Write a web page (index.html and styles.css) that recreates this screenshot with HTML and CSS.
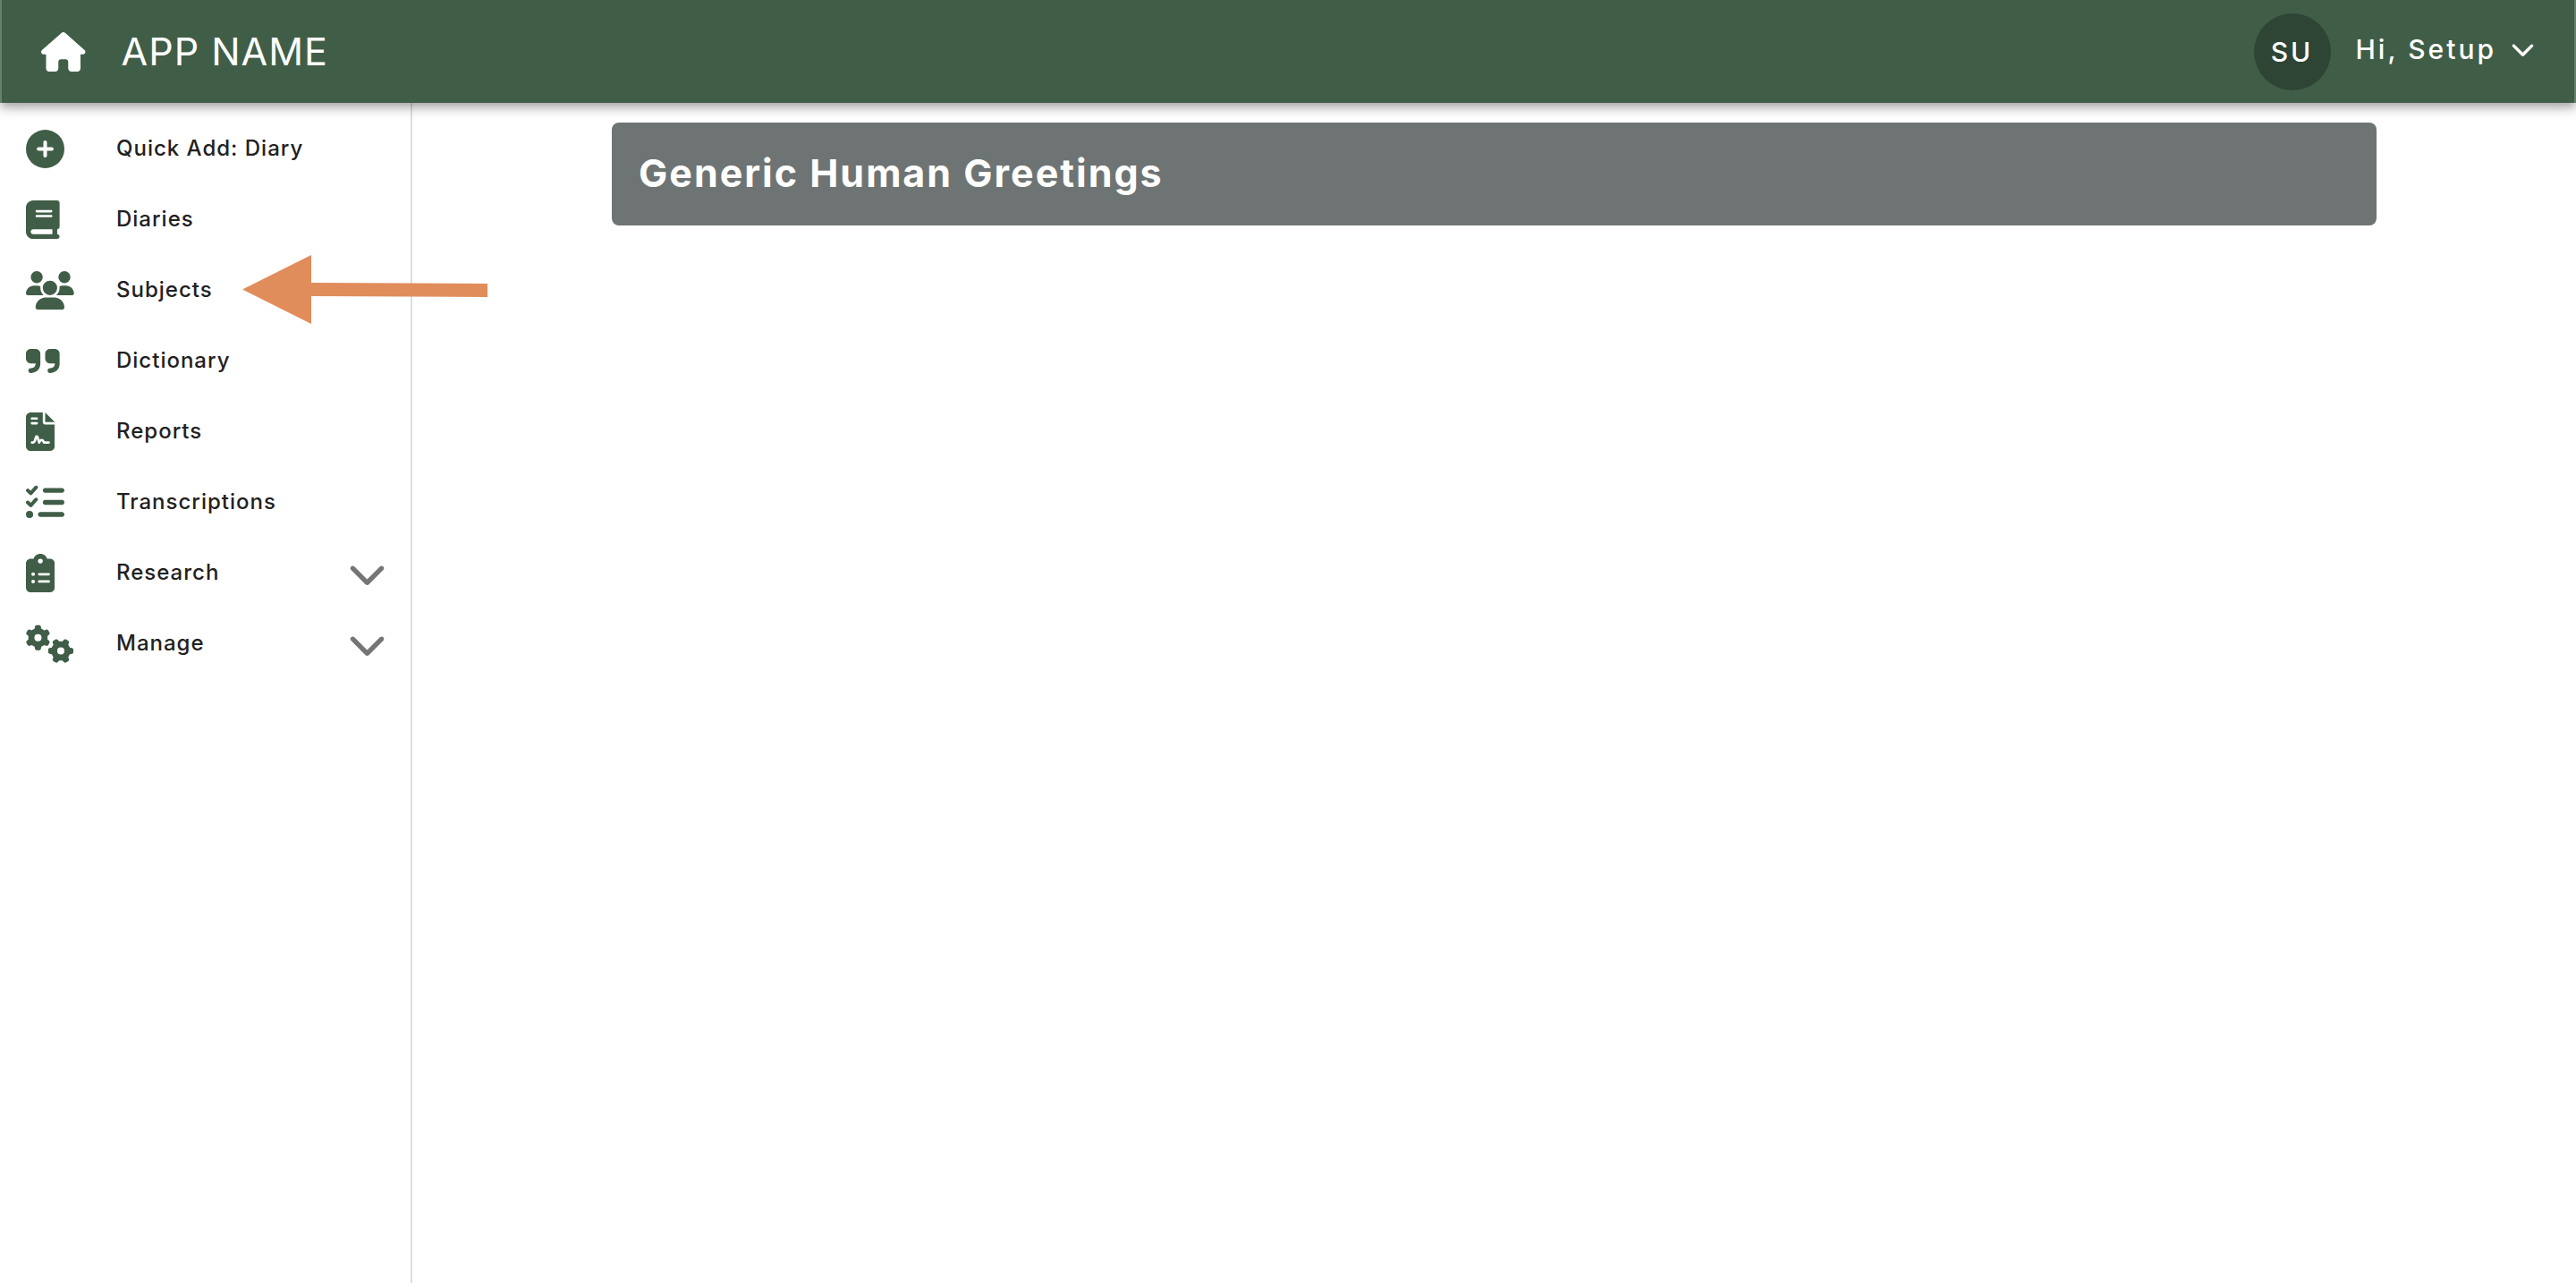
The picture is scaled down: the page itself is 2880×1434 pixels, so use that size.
FILE: index.html
```html
<!DOCTYPE html>
<html lang="en">
<head>
<meta charset="utf-8">
<title>App Name</title>
<link rel="stylesheet" href="styles.css">
</head>
<body>
<header class="topbar">
  <a class="brand" href="#">
    <svg class="brand-icon" viewBox="0 0 576 512" aria-hidden="true"><path d="M575.8 255.5c0 18-15 32.1-32 32.1h-32l.7 160.2c0 2.7-.2 5.4-.5 8.1V472c0 22.1-17.9 40-40 40H456c-1.1 0-2.2 0-3.3-.1c-1.4 .1-2.8 .1-4.2 .1H416 392c-22.1 0-40-17.9-40-40V448 384c0-17.7-14.3-32-32-32H256c-17.7 0-32 14.3-32 32v64 24c0 22.1-17.9 40-40 40H160 128.1c-1.5 0-3-.1-4.5-.2c-1.2 .1-2.4 .2-3.6 .2H104c-22.1 0-40-17.9-40-40V360c0-.9 0-1.9 .1-2.8V287.6H32c-18 0-32-14-32-32.1c0-9 3-17 10-24L266.4 8c7-7 15-8 22-8s15 2 21 7L564.8 231.5c8 7 12 15 11 24z"/></svg>
    <span class="brand-name">APP NAME</span>
  </a>
  <div class="user">
    <span class="avatar">SU</span>
    <button class="user-menu" type="button">
      <span>Hi, Setup</span>
      <svg class="user-chevron" viewBox="0 0 512 512" aria-hidden="true"><path d="M233.4 406.6c12.5 12.5 32.8 12.5 45.3 0l192-192c12.5-12.5 12.5-32.8 0-45.3s-32.8-12.5-45.3 0L256 338.7 86.6 169.4c-12.5-12.5-32.8-12.5-45.3 0s-12.5 32.8 0 45.3l192 192z"/></svg>
    </button>
  </div>
</header>
<div class="layout">
  <nav class="sidebar" aria-label="Main">
    <ul class="menu">
      <li class="menu-row"><a class="menu-item" href="#">
        <span class="menu-icon"><svg viewBox="0 0 512 512" aria-hidden="true"><path d="M256 512A256 256 0 1 0 256 0a256 256 0 1 0 0 512zM232 344V280H168c-13.3 0-24-10.7-24-24s10.7-24 24-24h64V168c0-13.3 10.7-24 24-24s24 10.7 24 24v64h64c13.3 0 24 10.7 24 24s-10.7 24-24 24H280v64c0 13.3-10.7 24-24 24s-24-10.7-24-24z"/></svg></span>
        <span class="menu-label">Quick Add: Diary</span></a></li>
      <li class="menu-row"><a class="menu-item" href="#">
        <span class="menu-icon"><svg viewBox="0 0 448 512" aria-hidden="true"><path d="M96 0C43 0 0 43 0 96V416c0 53 43 96 96 96H384h32c17.7 0 32-14.3 32-32s-14.3-32-32-32V384c17.7 0 32-14.3 32-32V32c0-17.7-14.3-32-32-32H384 96zm0 384H352v64H96c-17.7 0-32-14.3-32-32s14.3-32 32-32zm32-240c0-8.8 7.2-16 16-16H336c8.8 0 16 7.2 16 16s-7.2 16-16 16H144c-8.8 0-16-7.2-16-16zm16 48H336c8.8 0 16 7.2 16 16s-7.2 16-16 16H144c-8.8 0-16-7.2-16-16s7.2-16 16-16z"/></svg></span>
        <span class="menu-label">Diaries</span></a></li>
      <li class="menu-row"><a class="menu-item" href="#">
        <span class="menu-icon"><svg viewBox="0 0 640 512" aria-hidden="true"><path d="M144 0a80 80 0 1 1 0 160A80 80 0 1 1 144 0zM512 0a80 80 0 1 1 0 160A80 80 0 1 1 512 0zM0 298.7C0 239.8 47.8 192 106.7 192h42.7c15.9 0 31 3.5 44.6 9.7c-1.3 7.2-1.9 14.7-1.9 22.3c0 38.2 16.8 72.5 43.3 96c-.2 0-.4 0-.7 0H21.3C9.6 320 0 310.4 0 298.7zM405.3 320c-.2 0-.4 0-.7 0c26.6-23.5 43.3-57.8 43.3-96c0-7.6-.7-15-1.9-22.3c13.6-6.3 28.7-9.7 44.6-9.7h42.7C592.2 192 640 239.8 640 298.7c0 11.8-9.6 21.3-21.3 21.3H405.3zM224 224a96 96 0 1 1 192 0 96 96 0 1 1 -192 0zM128 485.3C128 411.7 187.7 352 261.3 352H378.7C452.3 352 512 411.7 512 485.3c0 14.7-11.9 26.7-26.7 26.7H154.7c-14.7 0-26.7-11.9-26.7-26.7z"/></svg></span>
        <span class="menu-label">Subjects</span></a>
        <svg class="pointer" viewBox="0 0 274 77" aria-hidden="true"><path d="M0 38.5L77 0V31L274 32V47L77 46V77Z"/></svg></li>
      <li class="menu-row"><a class="menu-item" href="#">
        <span class="menu-icon"><svg viewBox="0 0 448 512" aria-hidden="true"><path d="M448 296c0 66.3-53.7 120-120 120h-8c-17.7 0-32-14.3-32-32s14.3-32 32-32h8c30.9 0 56-25.1 56-56v-8H320c-35.3 0-64-28.7-64-64V160c0-35.3 28.7-64 64-64h64c35.3 0 64 28.7 64 64v32 32 72zm-256 0c0 66.3-53.7 120-120 120H64c-17.7 0-32-14.3-32-32s14.3-32 32-32h8c30.9 0 56-25.1 56-56v-8H64c-35.3 0-64-28.7-64-64V160c0-35.3 28.7-64 64-64h64c35.3 0 64 28.7 64 64v32 32 72z"/></svg></span>
        <span class="menu-label">Dictionary</span></a></li>
      <li class="menu-row"><a class="menu-item" href="#">
        <span class="menu-icon"><svg viewBox="0 0 384 512" aria-hidden="true"><path d="M64 0C28.7 0 0 28.7 0 64V448c0 35.3 28.7 64 64 64H320c35.3 0 64-28.7 64-64V160H256c-17.7 0-32-14.3-32-32V0H64zM256 0V128H384L256 0zM80 64h64c8.8 0 16 7.2 16 16s-7.2 16-16 16H80c-8.8 0-16-7.2-16-16s7.2-16 16-16zm0 64h64c8.8 0 16 7.2 16 16s-7.2 16-16 16H80c-8.8 0-16-7.2-16-16s7.2-16 16-16zm54.2 253.8c-6.1 20.3-24.8 34.2-46 34.2H80c-8.8 0-16-7.2-16-16s7.2-16 16-16h8.2c7.1 0 13.3-4.6 15.3-11.4l14.9-49.5c3.4-11.3 13.8-19.1 25.6-19.1s22.2 7.7 25.6 19.1l11.6 38.6c7.4-6.2 16.8-9.7 26.8-9.7c15.9 0 30.4 9 37.5 23.2l4.4 8.8H304c8.8 0 16 7.2 16 16s-7.2 16-16 16H240c-6.1 0-11.6-3.4-14.3-8.8l-8.8-17.7c-1.7-3.4-5.1-5.5-8.8-5.5s-7.2 2.1-8.8 5.5l-8.8 17.7c-2.9 5.9-9.2 9.4-15.7 8.8s-12.1-5.1-13.9-11.3L144 349l-9.8 32.8z"/></svg></span>
        <span class="menu-label">Reports</span></a></li>
      <li class="menu-row"><a class="menu-item" href="#">
        <span class="menu-icon"><svg viewBox="0 0 512 512" aria-hidden="true"><path d="M152.1 38.2c9.9 8.9 10.7 24 1.8 33.9l-72 80c-4.4 4.9-10.6 7.8-17.2 7.9s-12.9-2.4-17.6-7L7 113C-2.3 103.6-2.3 88.4 7 79s24.6-9.4 33.9 0l22.1 22.1 55.1-61.2c8.9-9.9 24-10.7 33.9-1.8zm0 160c9.9 8.9 10.7 24 1.8 33.9l-72 80c-4.4 4.9-10.6 7.8-17.2 7.9s-12.9-2.4-17.6-7L7 273c-9.4-9.4-9.4-24.6 0-33.9s24.6-9.4 33.9 0l22.1 22.1 55.1-61.2c8.9-9.9 24-10.7 33.9-1.8zM224 96c0-17.7 14.3-32 32-32H480c17.7 0 32 14.3 32 32s-14.3 32-32 32H256c-17.7 0-32-14.3-32-32zm0 160c0-17.7 14.3-32 32-32H480c17.7 0 32 14.3 32 32s-14.3 32-32 32H256c-17.7 0-32-14.3-32-32zM160 416c0-17.7 14.3-32 32-32H480c17.7 0 32 14.3 32 32s-14.3 32-32 32H192c-17.7 0-32-14.3-32-32zM48 368a48 48 0 1 1 0 96 48 48 0 1 1 0-96z"/></svg></span>
        <span class="menu-label">Transcriptions</span></a></li>
      <li class="menu-row"><button class="menu-item" type="button" aria-expanded="false">
        <span class="menu-icon"><svg viewBox="0 0 384 512" aria-hidden="true"><path d="M192 0c-41.8 0-77.4 26.7-90.5 64H64C28.7 64 0 92.7 0 128V448c0 35.3 28.7 64 64 64H320c35.3 0 64-28.7 64-64V128c0-35.3-28.7-64-64-64H282.5C269.4 26.7 233.8 0 192 0zm0 64a32 32 0 1 1 0 64 32 32 0 1 1 0-64zM72 272a24 24 0 1 1 48 0 24 24 0 1 1 -48 0zm104-16H304c8.8 0 16 7.2 16 16s-7.2 16-16 16H176c-8.8 0-16-7.2-16-16s7.2-16 16-16zM72 368a24 24 0 1 1 48 0 24 24 0 1 1 -48 0zm88 0c0-8.8 7.2-16 16-16H304c8.8 0 16 7.2 16 16s-7.2 16-16 16H176c-8.8 0-16-7.2-16-16z"/></svg></span>
        <span class="menu-label">Research</span>
        <svg class="menu-chevron" viewBox="0 0 512 512" aria-hidden="true"><path d="M233.4 406.6c12.5 12.5 32.8 12.5 45.3 0l192-192c12.5-12.5 12.5-32.8 0-45.3s-32.8-12.5-45.3 0L256 338.7 86.6 169.4c-12.5-12.5-32.8-12.5-45.3 0s-12.5 32.8 0 45.3l192 192z"/></svg></button></li>
      <li class="menu-row"><button class="menu-item" type="button" aria-expanded="false">
        <span class="menu-icon"><svg viewBox="0 0 640 512" aria-hidden="true"><path d="M308.5 135.3c7.1-6.3 9.9-16.2 6.2-25c-2.3-5.3-4.8-10.5-7.6-15.5L304 89.4c-3-5-6.3-9.9-9.8-14.6c-5.7-7.6-15.7-10.1-24.7-7.1l-28.2 9.3c-10.7-8.8-23-16-36.2-20.9L199 27.1c-1.9-9.3-9.1-16.7-18.5-17.8C173.9 8.4 167.2 8 160.4 8h-.7c-6.8 0-13.5 .4-20.1 1.2c-9.4 1.1-16.6 8.6-18.5 17.8L115 56.1c-13.3 5-25.5 12.1-36.2 20.9L50.5 67.8c-9-3-19-.5-24.7 7.1c-3.5 4.7-6.8 9.6-9.9 14.6l-3 5.3c-2.8 5-5.3 10.2-7.6 15.6c-3.7 8.7-.9 18.6 6.2 25l22.2 19.8C32.6 161.9 32 168.9 32 176s.6 14.1 1.7 20.9L11.5 216.7c-7.1 6.3-9.9 16.2-6.2 25c2.3 5.3 4.8 10.5 7.6 15.6l3 5.2c3 5.1 6.3 9.9 9.9 14.6c5.7 7.6 15.7 10.1 24.7 7.1l28.2-9.3c10.7 8.8 23 16 36.2 20.9l6.1 29.1c1.9 9.3 9.1 16.7 18.5 17.8c6.7 .8 13.5 1.2 20.4 1.2s13.7-.4 20.4-1.2c9.4-1.1 16.6-8.6 18.5-17.8l6.1-29.1c13.3-5 25.5-12.1 36.2-20.9l28.2 9.3c9 3 19 .5 24.7-7.1c3.5-4.7 6.8-9.5 9.8-14.6l3.1-5.4c2.8-5 5.3-10.2 7.6-15.5c3.7-8.7 .9-18.6-6.2-25l-22.2-19.8c1.1-6.8 1.7-13.8 1.7-20.9s-.6-14.1-1.7-20.9l22.2-19.8zM112 176a48 48 0 1 1 96 0 48 48 0 1 1 -96 0zM504.7 500.5c6.3 7.1 16.2 9.9 25 6.2c5.3-2.3 10.5-4.8 15.5-7.6l5.4-3.1c5-3 9.9-6.3 14.6-9.8c7.6-5.7 10.1-15.7 7.1-24.7l-9.3-28.2c8.8-10.7 16-23 20.9-36.2l29.1-6.1c9.3-1.9 16.7-9.1 17.8-18.5c.8-6.7 1.2-13.5 1.2-20.4s-.4-13.7-1.2-20.4c-1.1-9.4-8.6-16.6-17.8-18.5L583.9 307c-5-13.3-12.1-25.5-20.9-36.2l9.3-28.2c3-9 .5-19-7.1-24.7c-4.7-3.5-9.6-6.8-14.6-9.9l-5.3-3c-5-2.8-10.2-5.3-15.6-7.6c-8.7-3.7-18.6-.9-25 6.2l-19.8 22.2c-6.8-1.1-13.8-1.7-20.9-1.7s-14.1 .6-20.9 1.7l-19.8-22.2c-6.3-7.1-16.2-9.9-25-6.2c-5.3 2.3-10.5 4.8-15.6 7.6l-5.2 3c-5.1 3-9.9 6.3-14.6 9.9c-7.6 5.7-10.1 15.7-7.1 24.7l9.3 28.2c-8.8 10.7-16 23-20.9 36.2L315.1 313c-9.3 1.9-16.7 9.1-17.8 18.5c-.8 6.7-1.2 13.5-1.2 20.4s.4 13.7 1.2 20.4c1.1 9.4 8.6 16.6 17.8 18.5l29.1 6.1c5 13.3 12.1 25.5 20.9 36.2l-9.3 28.2c-3 9-.5 19 7.1 24.7c4.7 3.5 9.5 6.8 14.6 9.8l5.4 3.1c5 2.8 10.2 5.3 15.5 7.6c8.7 3.7 18.6 .9 25-6.2l19.8-22.2c6.8 1.1 13.8 1.7 20.9 1.7s14.1-.6 20.9-1.7l19.8 22.2zM464 304a48 48 0 1 1 0 96 48 48 0 1 1 0-96z"/></svg></span>
        <span class="menu-label">Manage</span>
        <svg class="menu-chevron" viewBox="0 0 512 512" aria-hidden="true"><path d="M233.4 406.6c12.5 12.5 32.8 12.5 45.3 0l192-192c12.5-12.5 12.5-32.8 0-45.3s-32.8-12.5-45.3 0L256 338.7 86.6 169.4c-12.5-12.5-32.8-12.5-45.3 0s-12.5 32.8 0 45.3l192 192z"/></svg></button></li>
    </ul>
  </nav>
  <main class="content">
    <h1 class="banner">Generic Human Greetings</h1>
  </main>
</div>
</body>
</html>
```
FILE: styles.css
```css
* {
  box-sizing: border-box;
}

body {
  margin: 0;
  min-height: 100vh;
  display: flex;
  flex-direction: column;
  background: #fff;
  color: #212121;
  font-family: Inter, "Liberation Sans", sans-serif;
  font-size: 24px;
  letter-spacing: 1px;
}

svg {
  display: block;
  fill: currentColor;
}

a {
  color: inherit;
  text-decoration: none;
}

button {
  border: 0;
  padding: 0;
  background: none;
  color: inherit;
  font: inherit;
  letter-spacing: inherit;
  text-align: left;
  cursor: pointer;
}

.topbar {
  position: relative;
  z-index: 1;
  display: flex;
  align-items: center;
  justify-content: space-between;
  height: 115px;
  padding: 0 44px;
  border: solid #66806c;
  border-width: 0 2px;
  background: #405e47;
  color: #fff;
  box-shadow: 0 4px 8px -2px rgba(0, 0, 0, 0.2), 0 8px 10px rgba(0, 0, 0, 0.14), 0 2px 20px rgba(0, 0, 0, 0.12);
}

.brand {
  display: flex;
  align-items: center;
  gap: 40px;
}

.brand-icon {
  height: 44px;
}

.brand-name {
  padding-bottom: 2px;
  font-size: 43px;
  line-height: 48px;
}

.user {
  display: flex;
  align-items: center;
  gap: 28px;
  font-size: 30px;
  font-weight: 500;
  letter-spacing: 3px;
}

.avatar {
  display: flex;
  align-items: center;
  justify-content: center;
  width: 86px;
  height: 86px;
  border-radius: 50%;
  background: #2e4535;
}

.user-menu {
  display: flex;
  align-items: center;
  gap: 16px;
  padding-bottom: 6px;
}

.user-chevron {
  width: 27px;
  height: 27px;
}

.layout {
  flex: 1;
  display: flex;
}

.sidebar {
  flex: 0 0 461px;
  padding: 12px 27px 12px 29px;
  border-right: 2px solid #dedede;
}

.menu {
  margin: 0;
  padding: 0;
  list-style: none;
}

.menu-row {
  position: relative;
}

.menu-item {
  display: flex;
  align-items: center;
  width: 100%;
  height: 79px;
  font-weight: 500;
}

.menu-icon {
  flex: 0 0 101px;
  color: #405e47;
}

.menu-icon svg {
  height: 43px;
}

.menu-label {
  flex: 1;
  padding-bottom: 2px;
}

.menu-chevron {
  width: 43px;
  height: 43px;
  color: #757575;
}

.pointer {
  position: absolute;
  top: 0;
  left: 242px;
  width: 274px;
  height: 77px;
  color: #e18c5b;
}

.content {
  flex: 1;
  padding: 22px 223px;
}

.banner {
  margin: 0;
  padding: 31px 30px 33px;
  border-radius: 8px;
  background: #6e7473;
  color: #fff;
  font-size: 43px;
  font-weight: 700;
  line-height: 51px;
  letter-spacing: 2px;
}
```
